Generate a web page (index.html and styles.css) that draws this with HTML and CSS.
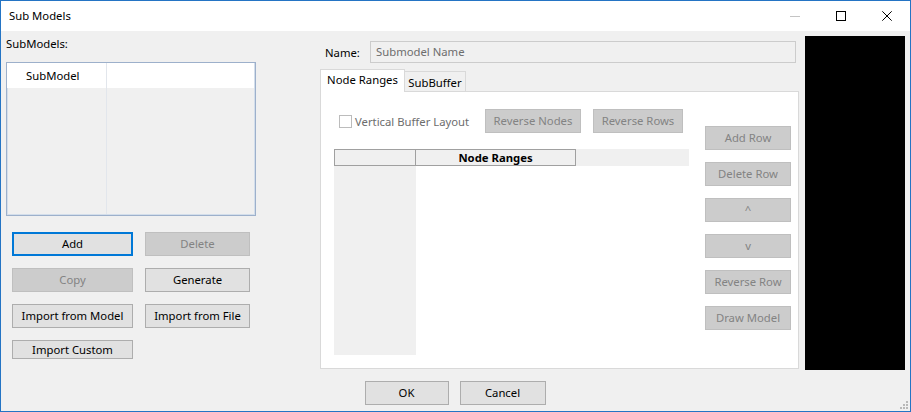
FILE: index.html
```html
<!DOCTYPE html>
<html>
<head>
<meta charset="utf-8">
<link rel="stylesheet" href="styles.css">
</head>
<body>
<div class="window">
  <div class="titlebar">
    <span class="title">Sub Models</span>
    <div class="controls">
      <span class="ctl"><svg width="10" height="10" viewBox="0 0 10 10"><line x1="0" y1="5.5" x2="10" y2="5.5" stroke="#c4c4c4" stroke-width="1"/></svg></span>
      <span class="ctl"><svg width="10" height="10" viewBox="0 0 10 10"><rect x="0.5" y="0.5" width="9" height="9" fill="none" stroke="#000" stroke-width="1"/></svg></span>
      <span class="ctl"><svg width="10" height="10" viewBox="0 0 10 10"><path d="M0.3 0.3 L9.7 9.7 M9.7 0.3 L0.3 9.7" stroke="#000" stroke-width="1"/></svg></span>
    </div>
  </div>
  <div class="main">
    <div class="left">
      <div class="label">SubModels:</div>
      <div class="list">
        <div class="list-head"><div class="lcol1">SubModel</div><div class="lcol2"></div></div>
        <div class="list-body"><div class="lcol1"></div><div class="lcol2"></div></div>
      </div>
      <div class="btn-grid">
        <button class="btn focus">Add</button>
        <button class="btn dis">Delete</button>
        <button class="btn dis">Copy</button>
        <button class="btn">Generate</button>
        <button class="btn">Import from Model</button>
        <button class="btn">Import from File</button>
        <button class="btn short">Import Custom</button>
      </div>
    </div>
    <div class="middle">
      <div class="name-row">
        <span class="name-label">Name:</span>
        <div class="input">Submodel Name</div>
      </div>
      <div class="tabs">
        <div class="tab active">Node Ranges</div>
        <div class="tab">SubBuffer</div>
      </div>
      <div class="panel">
        <div class="panel-left">
          <div class="top-row">
            <span class="check"><span class="box"></span><span class="check-label">Vertical Buffer Layout</span></span>
            <button class="btn dis rn">Reverse Nodes</button>
            <button class="btn dis rr">Reverse Rows</button>
          </div>
          <div class="grid">
            <div class="grid-head">
              <div class="corner"></div>
              <div class="colhead">Node Ranges</div>
            </div>
            <div class="grid-body">
              <div class="rowheads"></div>
            </div>
          </div>
        </div>
        <div class="side-buttons">
          <button class="btn dis">Add Row</button>
          <button class="btn dis">Delete Row</button>
          <button class="btn dis">^</button>
          <button class="btn dis">v</button>
          <button class="btn dis">Reverse Row</button>
          <button class="btn dis">Draw Model</button>
        </div>
      </div>
    </div>
    <div class="preview"></div>
  </div>
  <div class="footer">
    <button class="btn ok">OK</button>
    <button class="btn cancel">Cancel</button>
  </div>
  <svg class="grip" width="8" height="8" viewBox="0 0 8 8">
    <rect x="6" y="0" width="2" height="2" fill="#b8b8b8"/>
    <rect x="3" y="3" width="2" height="2" fill="#b8b8b8"/>
    <rect x="6" y="3" width="2" height="2" fill="#b8b8b8"/>
    <rect x="0" y="6" width="2" height="2" fill="#b8b8b8"/>
    <rect x="3" y="6" width="2" height="2" fill="#b8b8b8"/>
    <rect x="6" y="6" width="2" height="2" fill="#b8b8b8"/>
  </svg>
</div>
</body>
</html>
```

FILE: styles.css
```css
* { box-sizing: border-box; }
html, body { margin: 0; padding: 0; }
body {
  font-family: "Noto Sans", "Liberation Sans", sans-serif;
  font-size: 11.3px;
  color: #000;
  background: #f0f0f0;
}
.window {
  position: relative;
  width: 911px;
  height: 412px;
  border: 1px solid #2474c4;
  background: #f0f0f0;
  display: flex;
  flex-direction: column;
}
.titlebar {
  height: 30px;
  background: #fff;
  display: flex;
  align-items: center;
  justify-content: space-between;
  flex: none;
}
.title { padding-left: 8px; line-height: 16px; }
.controls { display: flex; height: 30px; }
.ctl {
  width: 46px;
  height: 30px;
  display: flex;
  align-items: center;
  justify-content: center;
}
.ctl svg { display: block; }

.main {
  display: flex;
  padding: 5px 5px 0 5px;
  height: 339px;
  flex: none;
}
.left { width: 250px; flex: none; }
.label { line-height: 16px; height: 16px; margin-bottom: 10px; }
.list {
  width: 250px;
  height: 154px;
  border: 1px solid #9db0cb;
  box-shadow: inset 0 0 0 1px #d3deeb;
  display: flex;
  flex-direction: column;
  background: #f0f0f0;
  padding: 1px 1px 1px 0;
}
.list-head { display: flex; height: 25px; background: #fff; margin-top: -1px; }
.list-body { display: flex; flex: 1; }
.lcol1 { width: 100px; border-right: 1px solid #e2e6ec; padding-left: 19px; line-height: 25px; }
.lcol2 { flex: 1; }

.btn {
  font-family: "Noto Sans", "Liberation Sans", sans-serif;
  font-size: 11.3px;
  height: 24px;
  padding: 0;
  margin: 0;
  background: #e1e1e1;
  border: 1px solid #adadad;
  color: #000;
  line-height: 20px;
  text-align: center;
}
.btn.dis { background: #cccccc; border-color: #bfbfbf; color: #838383; }
.btn.focus { border: 2px solid #0078d7; }
.btn.short { height: 19px; line-height: 16px; }

.btn-grid {
  margin-top: 16px;
  margin-left: 6px;
  display: grid;
  grid-template-columns: 121px 105px;
  column-gap: 12px;
  row-gap: 12px;
  align-items: start;
}

.middle { width: 479px; margin-left: 64px; flex: none; }
.name-row { display: flex; align-items: center; margin-top: 5px; height: 22px; }
.name-label { width: 50px; padding-left: 5px; }
.input {
  width: 426px;
  height: 22px;
  border: 1px solid #cccccc;
  background: #f0f0f0;
  color: #6d6d6d;
  padding-left: 5px;
  line-height: 20px;
}
.tabs { display: flex; align-items: flex-end; margin-top: 6px; height: 23px; margin-bottom: -1px; position: relative; z-index: 1; }
.tab {
  width: 61px;
  height: 21px;
  border: 1px solid #d9d9d9;
  border-left: none;
  background: #f0f0f0;
  text-align: center;
  line-height: 21px;
}
.tab.active {
  width: 85px;
  height: 23px;
  border: 1px solid #d9d9d9;
  border-bottom: none;
  background: #fff;
  line-height: 19px;
}
.panel {
  height: 278px;
  border: 1px solid #d9d9d9;
  background: #fff;
  display: flex;
}
.panel-left { width: 368px; flex: none; }
.top-row { display: flex; align-items: center; margin-top: 17px; margin-left: 18px; height: 24px; }
.check { display: flex; align-items: center; width: 146px; }
.box { width: 13px; height: 13px; border: 1px solid #bcbcbc; background: #fff; margin-right: 3px; }
.check-label { color: #6d6d6d; }
.rn { width: 96px; }
.rr { width: 90px; margin-left: 12px; }
.grid { margin-top: 16px; margin-left: 13px; width: 355px; height: 206px; display: flex; flex-direction: column; }
.grid-head { display: flex; height: 17px; background: #f0f0f0; }
.corner { width: 82px; height: 17px; border: 1px solid #a0a0a0; }
.colhead {
  width: 160px; height: 17px;
  border: 1px solid #a0a0a0; border-left: none;
  font-weight: bold; text-align: center; line-height: 15px;
}
.grid-body { flex: 1; display: flex; }
.rowheads { width: 82px; background: #f0f0f0; }
.side-buttons {
  margin-left: 16px;
  margin-top: 34px;
  display: flex;
  flex-direction: column;
  gap: 12px;
}
.side-buttons .btn { width: 86px; }
.preview { width: 100px; height: 334px; background: #000; margin-left: 6px; flex: none; }

.footer { display: flex; justify-content: center; gap: 11px; margin-top: 11px; padding-right: 1px; }
.ok { width: 84px; }
.cancel { width: 86px; }
.grip { position: absolute; right: 2px; bottom: 2px; }
```
